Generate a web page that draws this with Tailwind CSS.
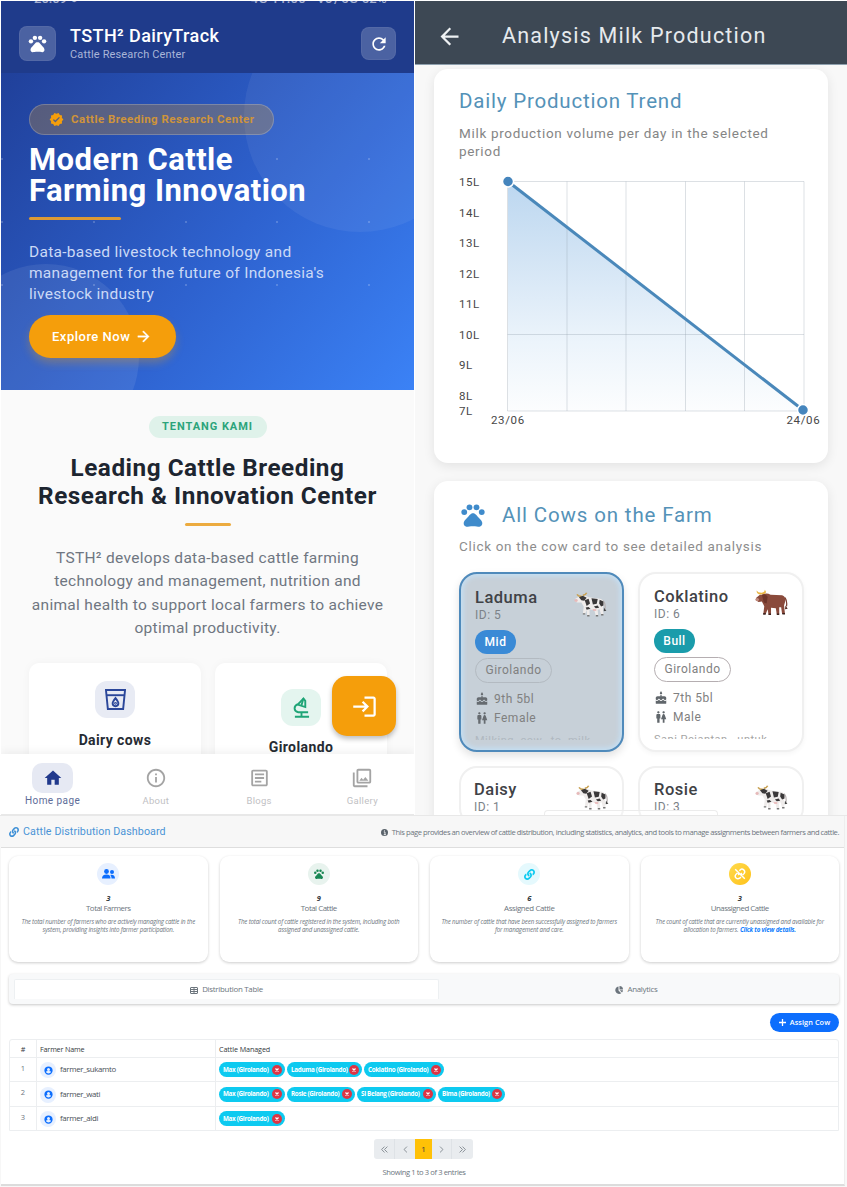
<!DOCTYPE html>
<html lang="en">
<head>
<meta charset="utf-8">
<title>DairyTrack</title>
<script src="https://cdn.jsdelivr.net/npm/@tailwindcss/browser@4"></script>
</head>
<body class="bg-white">
<svg class="hidden">
  <defs>
    <symbol id="pets" viewBox="0 0 24 24"><circle cx="4.5" cy="9.5" r="2.5"/><circle cx="9" cy="5.5" r="2.5"/><circle cx="15" cy="5.5" r="2.5"/><circle cx="19.5" cy="9.5" r="2.5"/><path d="M17.34 14.86c-.87-1.02-1.6-1.89-2.48-2.91-.46-.54-1.05-1.08-1.75-1.32-.11-.04-.22-.07-.33-.09-.25-.04-.52-.04-.78-.04s-.53 0-.79.05c-.11.02-.22.05-.33.09-.7.24-1.28.78-1.75 1.32-.87 1.02-1.6 1.89-2.48 2.91-1.31 1.31-2.92 2.76-2.62 4.79.29 1.02 1.02 2.03 2.33 2.32.73.15 3.06-.44 5.54-.44h.18c2.48 0 4.81.58 5.54.44 1.31-.29 2.04-1.31 2.33-2.32.31-2.04-1.3-3.49-2.61-4.8z"/></symbol>
    <symbol id="arrow" viewBox="0 0 24 24"><path d="M12 4l-1.41 1.41L16.17 11H4v2h12.17l-5.58 5.59L12 20l8-8z"/></symbol>
    <symbol id="cake" viewBox="0 0 24 24"><path d="M12 6c1.11 0 2-.9 2-2 0-.38-.1-.73-.29-1.03L12 0l-1.71 2.97c-.19.3-.29.65-.29 1.03 0 1.1.9 2 2 2zm4.6 9.99l-1.07-1.07-1.08 1.07c-1.3 1.3-3.58 1.31-4.89 0l-1.07-1.07-1.09 1.07C6.75 16.64 5.88 17 4.96 17c-.73 0-1.4-.23-1.96-.61V21c0 .55.45 1 1 1h16c.55 0 1-.45 1-1v-4.61c-.56.38-1.23.61-1.96.61-.92 0-1.79-.36-2.44-1.01zM18 9h-5V7h-2v2H6c-1.66 0-3 1.34-3 3v1.54c0 1.08.88 1.96 1.96 1.96.52 0 1.02-.2 1.38-.57l2.14-2.13 2.13 2.13c.74.74 2.03.74 2.77 0l2.14-2.13 2.13 2.13c.37.37.86.57 1.38.57 1.08 0 1.96-.88 1.96-1.96V12C21 10.34 19.66 9 18 9z"/></symbol>
    <symbol id="wc" viewBox="0 0 24 24"><path d="M5.5 22v-7.5H4V9c0-1.1.9-2 2-2h3c1.1 0 2 .9 2 2v5.5H9.5V22h-4zM18 22v-6h3l-2.54-7.63C18.18 7.55 17.42 7 16.56 7h-.12c-.86 0-1.63.55-1.9 1.37L12 16h3v6h3zM7.5 6c1.11 0 2-.89 2-2s-.89-2-2-2-2 .89-2 2 .89 2 2 2zm9 0c1.11 0 2-.89 2-2s-.89-2-2-2-2 .89-2 2 .89 2 2 2z"/></symbol>
    <symbol id="link" viewBox="0 0 512 512"><path d="M326.612 185.391c59.747 59.809 58.927 155.698.36 214.59-.11.12-.24.25-.36.37l-67.2 67.2c-59.27 59.27-155.699 59.262-214.96 0-59.27-59.26-59.27-155.7 0-214.96l37.106-37.106c9.84-9.84 26.786-3.3 27.294 10.606.648 17.722 3.826 35.527 9.69 52.721 1.986 5.822.567 12.262-3.783 16.612l-13.087 13.087c-28.026 28.026-28.905 73.66-1.155 101.96 28.024 28.579 74.086 28.749 102.325.51l67.2-67.19c28.191-28.191 28.073-73.757 0-101.83-3.701-3.694-7.429-6.564-10.341-8.569a16.037 16.037 0 0 1-6.947-12.606c-.396-10.567 3.348-21.456 11.698-29.806l21.054-21.055c5.521-5.521 14.182-6.199 20.584-1.731a152.482 152.482 0 0 1 20.522 17.197zM467.547 44.449c-59.261-59.262-155.69-59.27-214.96 0l-67.2 67.2c-.12.12-.25.25-.36.37-58.566 58.892-59.387 154.781.36 214.59a152.454 152.454 0 0 0 20.521 17.196c6.402 4.468 15.064 3.789 20.584-1.731l21.054-21.055c8.35-8.35 12.094-19.239 11.698-29.806a16.037 16.037 0 0 0-6.947-12.606c-2.912-2.005-6.64-4.875-10.341-8.569-28.073-28.073-28.191-73.639 0-101.83l67.2-67.19c28.239-28.239 74.3-28.069 102.325.51 27.75 28.3 26.872 73.934-1.155 101.96l-13.087 13.087c-4.35 4.35-5.769 10.79-3.783 16.612 5.864 17.194 9.042 34.999 9.69 52.721.509 13.906 17.454 20.446 27.294 10.606l37.106-37.106c59.271-59.259 59.271-155.699.001-214.959z"/></symbol>
    <symbol id="cow" viewBox="0 0 34 26"><path d="M30 9q3 3 2 9" fill="none" stroke="#b9b2b2" stroke-width="1.300"/><path d="M31 16.500l2.500 3-2.800.5z" fill="#444"/><path d="M7 4Q12 3 15 5.500L27 7Q31 8.500 31 12L30 16l.5 8H28L26.500 18l-2 .5.500 6.500h-2.500L21 19l-5-1v7h-2.500L13 18.500 11.500 23H9l1-8-2.500-4L3 11 .8 9.500 1.200 7 5 5z" fill="#efeceb"/><path d="M3 2.500Q4.500 5 8 4.500M9 3.500Q12 3 13 .8" stroke="#c8a050" stroke-width="1.700" fill="none"/><path d="M5 5.500l4-1.500 4 2-2.500 3-3-.5z" fill="#3a3839"/><ellipse cx="2" cy="8.900" rx="1.700" ry="1.500" fill="#e6b9b9"/><path d="M11 8.500l4-1.500 1.500 5-3.500 2.500zM18 6.500l6.500.8-1 5-4 .8zM26.500 8l4 2v4l-2.500 1-2-3zM12 16l3-.5 2 2-4 1zM20.500 15l4-1 1.500 2.500-3.500.5z" fill="#3a3839"/><path d="M19 18h4v1.500h-3z" fill="#e8b0b0"/><path d="M9 22h2.500v1.500H9zM13.500 24H16v1.500h-2.500zM22.500 24H25v1.500h-2.500zM28 23h2.500v1.500H28z" fill="#777"/></symbol>
    <symbol id="bull" viewBox="0 0 34 28"><path d="M31 9q2.500 4 1.500 9" fill="none" stroke="#7a3f33" stroke-width="1.300"/><path d="M31.500 17l2.300 3.500-2.800.5z" fill="#552a22"/><path d="M7 6Q12 3.500 16 6L28 6.500Q31.500 7.500 31.500 12L30 17l1 9h-3l-1-7-2 0v7.500h-2.500L21.500 20l-5-.5V27H14l-1-6-2 5H8.500L9.500 18 7 13 3.500 13.500.8 11.500 1.200 9 5 6z" fill="#8a4a3b"/><path d="M1.500 1.500Q1.500 5.500 6 5.800L10 5Q12.500 3.500 10 .8 10 3.500 7 3.800 3 4 1.500 1.500z" fill="#e9b440"/><path d="M7 6q4-2 6 2l-1 7-3-1z" fill="#6e3529"/><ellipse cx="2.200" cy="11" rx="1.900" ry="1.600" fill="#c08a7d"/><path d="M8.500 25H11v1.700H8.300zM14 25.500h2.500V27H14zM22.500 25.500H25V27h-2.500zM28.200 25H31v1.500h-2.700z" fill="#3d2420"/></symbol>
    <symbol id="usr" viewBox="0 0 24 24"><path d="M12 1a11 11 0 1 0 0 22 11 11 0 0 0 0-22zm0 4a4 4 0 1 1 0 8 4 4 0 0 1 0-8zm0 15c-3 0-5.500-1.500-7-3.700.5-2 4.500-2.800 7-2.800s6.500.8 7 2.800A8.500 8.500 0 0 1 12 20z"/></symbol>
    <symbol id="x" viewBox="0 0 10 10"><path d="M2.500 2.500l5 5m0-5l-5 5" stroke="#fff" stroke-width="2" fill="none"/></symbol>
  </defs>
</svg>
<div class="w-[847px] h-[1187px] overflow-hidden flex flex-col font-['Roboto',sans-serif]">
  <div class="flex h-[815px]">

    <!-- Mobile home -->
    <section class="relative w-[413px] ml-px mt-px h-[814px] overflow-hidden flex flex-col bg-[#fafafa] mr-px">
      <header class="h-[72px] shrink-0 bg-[#1f3b8b] overflow-hidden">
        <div class="h-[3px] overflow-hidden flex justify-between pl-[33px] pr-[27px] text-white/60 text-[13px] leading-[11px] font-medium">
          <span class="-mt-[8px]">20:09 &#9679;</span><span class="-mt-[8px] tracking-wide">4G 11.00 &nbsp; Vo) 5G 52%</span>
        </div>
        <div class="flex items-center pl-[18px] pr-[18px] mt-[22px] h-[35px]">
          <div class="w-[37px] h-[35px] rounded-[8px] bg-white/20 border border-white/5 flex items-center justify-center"><svg class="w-[21px] h-[21px] fill-white"><use href="#pets"/></svg></div>
          <div class="ml-[14px] flex-1 whitespace-nowrap">
            <div class="text-white text-[18px] leading-[20px] font-medium tracking-[0.400px]">TSTH² DairyTrack</div>
            <div class="text-[#a9b5d8] text-[11px] leading-[15px] tracking-[0.150px] mt-px">Cattle Research Center</div>
          </div>
          <div class="w-[35px] h-[33px] rounded-[8px] bg-white/20 border border-white/5 flex items-center justify-center"><svg viewBox="0 0 24 24" class="w-[20px] h-[20px] fill-white"><path d="M17.650 6.350C16.200 4.900 14.210 4 12 4c-4.420 0-7.990 3.580-7.990 8s3.570 8 7.990 8c3.730 0 6.840-2.550 7.730-6h-2.080c-.82 2.330-3.040 4-5.650 4-3.310 0-6-2.690-6-6s2.690-6 6-6c1.660 0 3.140.69 4.220 1.780L13 11h7V4l-2.350 2.350z"/></svg></div>
        </div>
      </header>

      <div class="relative h-[317px] shrink-0 overflow-hidden bg-linear-[130deg,#20409a_0%,#2e62cf_55%,#3b82f6_100%]">
        <div class="absolute left-[243px] -top-[73px] w-[232px] h-[232px] rounded-full bg-white/6"></div>
        <div class="absolute -left-[48px] top-[191px] w-[186px] h-[186px] rounded-full bg-white/8"></div>
        <svg class="absolute inset-0 w-full h-full fill-white/25"><g><circle cx="1" cy="86" r="1"/><circle cx="276" cy="86" r="1"/><circle cx="368" cy="86" r="1"/><circle cx="1" cy="149" r="1"/><circle cx="93" cy="149" r="1"/><circle cx="185" cy="149" r="1"/><circle cx="276" cy="149" r="1"/><circle cx="368" cy="149" r="1"/><circle cx="1" cy="212" r="1"/><circle cx="93" cy="212" r="1"/><circle cx="185" cy="212" r="1"/><circle cx="276" cy="212" r="1"/><circle cx="368" cy="212" r="1"/></g></svg>
        <div class="relative pl-[28px] pt-[31px] whitespace-nowrap">
          <div class="w-[245px] h-[31px] rounded-full bg-[#f59e0b]/25 border border-white/20 flex items-center pl-[19px]">
            <svg viewBox="0 0 24 24" class="w-[15px] h-[15px] fill-[#f59e0b]"><path d="M23 12l-2.440-2.790.34-3.690-3.610-.82-1.890-3.200L12 2.960 8.600 1.500 6.710 4.690 3.100 5.500l.34 3.700L1 12l2.440 2.790-.34 3.700 3.610.82L8.600 22.500l3.400-1.470 3.400 1.460 1.890-3.190 3.610-.82-.34-3.690L23 12zm-12.910 4.720l-3.800-3.810 1.480-1.480 2.320 2.330 5.850-5.870 1.480 1.480-7.330 7.350z"/></svg>
            <span class="ml-[7px] text-[11.500px] font-bold tracking-[0.480px] text-[#cf943a]">Cattle Breeding Research Center</span>
          </div>
          <h1 class="mt-[9px] text-white font-bold text-[31px] leading-[31px] tracking-[0.450px]">Modern Cattle<br>Farming Innovation</h1>
          <div class="mt-[11px] w-[92px] h-[3px] rounded bg-[#dd9a35]"></div>
          <p class="mt-[22px] text-[#cbd9f6] text-[15.500px] leading-[21px] tracking-[0.280px]">Data-based livestock technology and<br>management for the future of Indonesia's<br>livestock industry</p>
          <div class="mt-[10px] w-[147px] h-[43px] rounded-full bg-[#f59e0b] shadow-[0_5px_9px_rgba(245,158,11,0.3)] flex items-center pl-[23px] text-white text-[13px] font-medium tracking-[0.5px]">Explore Now<svg class="w-[17px] h-[17px] ml-[5px] fill-white stroke-white stroke-[0.5]"><use href="#arrow"/></svg></div>
        </div>
      </div>

      <div class="flex-1 overflow-hidden flex flex-col items-center whitespace-nowrap">
        <div class="mt-[26px] w-[118px] h-[22px] pt-px shrink-0 rounded-full bg-[#dff2ea] flex items-center justify-center text-[#2ba47b] text-[11px] font-bold tracking-[0.950px]">TENTANG KAMI</div>
        <h2 class="mt-[16px] text-center text-[#1d2530] font-bold text-[24.300px] leading-[28px] tracking-[0.520px]">Leading Cattle Breeding<br>Research &amp; Innovation Center</h2>
        <div class="mt-[13px] w-[46px] h-[3px] shrink-0 rounded bg-[#ecab3f]"></div>
        <p class="mt-[21px] text-center text-[#6f7681] text-[15.500px] leading-[23.300px] tracking-[0.300px]">TSTH² develops data-based cattle farming<br>technology and management, nutrition and<br>animal health to support local farmers to achieve<br>optimal productivity.</p>
        <div class="mt-[23px] flex gap-[14px] self-start ml-[28px] text-[#262b33] font-bold text-[14px] leading-[18px] tracking-[0.4px]">
          <div class="w-[172px] h-[130px] rounded-[10px] bg-white shadow-[0_0_8px_rgba(0,0,0,0.04)] flex flex-col items-center pt-[18px]">
            <div class="w-[40px] h-[37px] rounded-[12px] bg-[#e8ebf4] flex items-center justify-center"><svg viewBox="0 0 22 24" class="w-[21px] h-[23px]" fill="none" stroke="#2b479a" stroke-width="2"><path d="M1 2h20l-2 20H3z"/><path d="M2 7.500h18"/><path d="M11 10.500c-2 2.500-3 3.800-3 5.500a3 3 0 0 0 6 0c0-1.700-1-3-3-5.500z"/><circle cx="11" cy="16" r=".5"/></svg></div>
            <div class="mt-[13px]">Dairy cows</div>
          </div>
          <div class="w-[172px] h-[130px] rounded-[10px] bg-white shadow-[0_0_8px_rgba(0,0,0,0.04)] flex flex-col items-center pt-[26px]">
            <div class="w-[40px] h-[37px] rounded-[12px] bg-[#e4f5ef] flex items-center justify-center"><svg viewBox="0 0 18 22" class="w-[17px] h-[21px]" fill="none" stroke="#1fa577" stroke-width="2"><path d="M11 1.500L5 8l8 2.500 0-6.500z"/><path d="M11 1.500L9 8.500M5 7.500C.5 9.500.5 15 5.500 16H16M9 16v4M2 20.800h15"/></svg></div>
            <div class="mt-[12px]">Girolando</div>
          </div>
        </div>
      </div>

      <nav class="h-[61px] shrink-0 bg-white shadow-[0_-3px_8px_rgba(0,0,0,0.05)] relative flex justify-around text-[9.500px] leading-[12px] text-[#bfc1c4] tracking-[0.3px] whitespace-nowrap border-b border-[#e8e8e8]">
        <div class="w-[103px] flex flex-col items-center pt-[9px] text-[#5d6c98] text-[10px]"><div class="w-[41px] h-[30px] rounded-[10px] bg-[#e6e9f3] flex items-center justify-center"><svg viewBox="0 0 24 24" class="w-[20px] h-[20px] fill-[#21398c]"><path d="M10 20v-6h4v6h5v-8h3L12 3 2 12h3v8z"/></svg></div><span class="mt-[2px] tracking-[0.450px]">Home page</span></div>
        <div class="w-[103px] flex flex-col items-center pt-[13px]"><svg viewBox="0 0 24 24" class="w-[22px] h-[22px] fill-[#a4a4a4]"><path d="M11 7h2v2h-2zm0 4h2v6h-2zm1-9C6.480 2 2 6.480 2 12s4.480 10 10 10 10-4.480 10-10S17.520 2 12 2zm0 18c-4.410 0-8-3.590-8-8s3.590-8 8-8 8 3.590 8 8-3.590 8-8 8z"/></svg><span class="mt-[6px]">About</span></div>
        <div class="w-[103px] flex flex-col items-center pt-[13px]"><svg viewBox="0 0 24 24" class="w-[23px] h-[22px] fill-[#a4a4a4]"><path d="M19 5v14H5V5h14m0-2H5c-1.100 0-2 .9-2 2v14c0 1.100.9 2 2 2h14c1.100 0 2-.9 2-2V5c0-1.100-.9-2-2-2zM14 17H7v-2h7v2zm3-4H7v-2h10v2zm0-4H7V7h10v2z"/></svg><span class="mt-[6px]">Blogs</span></div>
        <div class="w-[103px] flex flex-col items-center pt-[13px]"><svg viewBox="0 0 24 24" class="w-[22px] h-[22px] fill-[#a4a4a4]"><path d="M20 4v12H8V4h12m0-2H8c-1.100 0-2 .9-2 2v12c0 1.100.9 2 2 2h12c1.100 0 2-.9 2-2V4c0-1.100-.9-2-2-2zm-8.500 9.670l1.690 2.260 2.480-3.100L19 15H9zM2 6v14c0 1.100.9 2 2 2h14v-2H4V6H2z"/></svg><span class="mt-[6px]">Gallery</span></div>
      </nav>
      <button class="absolute left-[331px] top-[675px] w-[64px] h-[60px] rounded-[15px] bg-[#f59e0b] shadow-[0_3px_5px_rgba(0,0,0,0.25)] flex items-center justify-center"><svg viewBox="0 0 24 24" class="w-[27px] h-[27px] fill-white"><path d="M11 7L9.600 8.400l2.600 2.600H2v2h10.200l-2.600 2.600L11 17l5-5-5-5zm9 12h-8v2h8c1.100 0 2-.9 2-2V5c0-1.100-.9-2-2-2h-8v2h8v14z"/></svg></button>
    </section>

    <!-- Milk analysis -->
    <section class="relative w-[432px] mt-px h-[814px] overflow-hidden bg-[#f8f8f8] whitespace-nowrap">
      <header class="h-[64px] bg-[#3d4854] border-b border-[#8ea0ae] flex items-center pl-[21px] pt-[7px]">
        <svg class="w-[27px] h-[27px] fill-[#eef1f3] rotate-180"><use href="#arrow"/></svg>
        <span class="ml-[39px] text-[#e6eaed] text-[21.500px] tracking-[1.200px]">Analysis Milk Production</span>
      </header>
      <div class="ml-[19px] mt-[4px] w-[394px] h-[394px] rounded-[14px] bg-white shadow-[0_3px_12px_rgba(0,0,0,0.09)] pl-[25px] pt-[20px]">
        <h2 class="text-[#5492b8] text-[20.500px] leading-[25px] tracking-[0.8px]">Daily Production Trend</h2>
        <p class="mt-[10px] text-[#858585] text-[13.500px] leading-[18px] tracking-[0.680px]">Milk production volume per day in the selected<br>period</p>
        <svg class="block mt-[13px] w-[369px] h-[260px] font-['Roboto',sans-serif]" viewBox="459 173 369 260">
          <defs><linearGradient id="g" x1="0" y1="0" x2="0" y2="1"><stop offset="0" stop-color="#bcd7f0"/><stop offset="0.350" stop-color="#d4e5f5"/><stop offset="0.700" stop-color="#ecf4fb"/><stop offset="1" stop-color="#fcfdfe"/></linearGradient></defs>
          <path d="M508 181.500L803 411H508z" fill="url(#g)"/>
          <path d="M507.500 181.500H804V411H507.500zM567 181.500V411M626 181.500V411M685.500 181.500V411M744.500 181.500V411M507.500 334.500H804" fill="none" stroke="#8c98a4" stroke-opacity="0.3"/>
          <path d="M508 181.500L803 410" stroke="#4a88ba" stroke-width="3"/>
          <circle cx="508" cy="181.500" r="5.500" fill="#4585bd" stroke="#fff" stroke-width="1.500"/><circle cx="803" cy="410" r="5.500" fill="#4585bd" stroke="#fff" stroke-width="1.500"/>
          <g font-size="11.500" fill="#474747" letter-spacing="0.500"><text x="459" y="186">15L</text><text x="459" y="216.500">14L</text><text x="459" y="247">13L</text><text x="459" y="277.500">12L</text><text x="459" y="308">11L</text><text x="459" y="338.500">10L</text><text x="459" y="369">9L</text><text x="459" y="399.500">8L</text><text x="459" y="414.500">7L</text><text x="491" y="423.500" letter-spacing="0.650">23/06</text><text x="786.500" y="423.500" letter-spacing="0.650">24/06</text></g>
        </svg>
      </div>
      <div class="ml-[19px] mt-[18px] w-[394px] h-[360px] rounded-[14px] bg-white shadow-[0_3px_12px_rgba(0,0,0,0.09)] pl-[25px] pt-[20px]">
        <div class="flex items-center h-[28px]"><svg class="w-[28px] h-[28px] fill-[#3f8bcb]"><use href="#pets"/></svg><h2 class="ml-[15px] text-[#5492b8] text-[20.500px] tracking-[0.850px]">All Cows on the Farm</h2></div>
        <p class="mt-[8px] text-[#8d8d8d] text-[13.500px] leading-[18px] tracking-[0.680px]">Click on the cow card to see detailed analysis</p>
        <div class="mt-[17px] grid grid-cols-[165px_166px] gap-x-[14px] gap-y-[14px] text-[12px] leading-[15px] tracking-[0.5px] text-[#808080]">
          <article class="h-[180px] rounded-[18px] border-2 border-[#4f8abb] bg-[#c7d0d8] shadow-[inset_0_0_5px_2px_#c4e0f6,0_4px_8px_rgba(0,0,0,0.12)] px-[14px] pt-[14px]">
            <div class="flex justify-between h-[35px]"><div><div class="text-[#3f4246] text-[16.500px] leading-[20px] font-medium">Laduma</div><div class="text-[#7c8288]">ID: 5</div></div><svg class="w-[33px] h-[25px] mt-[4px] mr-[1px]"><use href="#cow"/></svg></div>
            <div class="mt-[7px] w-[41px] h-[24px] rounded-full bg-[#3a8ad6] text-white font-medium flex items-center justify-center">Mid</div>
            <div class="mt-[4px] w-[77px] h-[25px] rounded-full border border-[#b3bac1] flex items-center justify-center">Girolando</div>
            <div class="mt-[8px] flex items-center h-[16px]"><svg class="w-[14px] h-[14px] fill-[#666b70]"><use href="#cake"/></svg><span class="ml-[5px]">9th 5bl</span></div>
            <div class="mt-[3px] flex items-center h-[16px]"><svg class="w-[14px] h-[14px] fill-[#666b70]"><use href="#wc"/></svg><span class="ml-[5px]">Female</span></div>
            <div class="mt-[9px] h-[5px] overflow-hidden text-[11px] leading-[11px] text-[#b0b8c0]">Milking &nbsp;cow, &nbsp;to &nbsp;milk</div>
          </article>
          <article class="h-[180px] rounded-[18px] border-2 border-[#f0f0f0] bg-white shadow-[0_2px_5px_rgba(0,0,0,0.04)] px-[14px] pt-[13px]">
            <div class="flex justify-between h-[35px]"><div><div class="text-[#3f4246] text-[16.500px] leading-[20px] font-medium">Coklatino</div><div class="text-[#7c8288]">ID: 6</div></div><svg class="w-[33px] h-[27px] mt-[2px]"><use href="#bull"/></svg></div>
            <div class="mt-[7px] w-[41px] h-[24px] rounded-full bg-[#1a9cab] text-white font-medium flex items-center justify-center">Bull</div>
            <div class="mt-[4px] w-[77px] h-[25px] rounded-full border border-[#b5aeb1] flex items-center justify-center">Girolando</div>
            <div class="mt-[8px] flex items-center h-[16px]"><svg class="w-[14px] h-[14px] fill-[#60666b]"><use href="#cake"/></svg><span class="ml-[5px]">7th 5bl</span></div>
            <div class="mt-[3px] flex items-center h-[16px]"><svg class="w-[14px] h-[14px] fill-[#60666b]"><use href="#wc"/></svg><span class="ml-[5px]">Male</span></div>
            <div class="mt-[9px] h-[5px] overflow-hidden text-[11px] leading-[11px] text-[#a5a5a5]">Sapi Pejantan &nbsp; untuk</div>
          </article>
          <article class="h-[60px] rounded-[18px] border-2 border-[#f0f0f0] bg-white px-[13px] pt-[12px]">
            <div class="flex justify-between"><div><div class="text-[#3f4246] text-[16.500px] leading-[20px] font-medium">Daisy</div><div class="text-[#7c8288]">ID: 1</div></div><svg class="w-[33px] h-[25px] mt-[5px]"><use href="#cow"/></svg></div>
          </article>
          <article class="h-[60px] rounded-[18px] border-2 border-[#f0f0f0] bg-white px-[14px] pt-[12px]">
            <div class="flex justify-between"><div><div class="text-[#3f4246] text-[16.500px] leading-[20px] font-medium">Rosie</div><div class="text-[#7c8288]">ID: 3</div></div><svg class="w-[33px] h-[25px] mt-[5px]"><use href="#cow"/></svg></div>
          </article>
        </div>
      </div>
      <div class="absolute left-[129px] bottom-0 w-[174px] h-[5px] rounded-t bg-white/20 border border-b-0 border-[#ececec]"></div>
    </section>
  </div>

  <!-- Distribution dashboard -->
  <section class="h-[372px] shrink-0 border-t border-[#e8e8e8] bg-[#f7f7f7] pl-px pr-[2px] font-['Open_Sans',sans-serif] text-[#6c757d] whitespace-nowrap">
    <div class="h-[370px] border-b-2 border-[#dcdcdc] border-r border-r-[#eeeeee] bg-white">
      <header class="h-[32px] bg-[#f7f7f7] border-b border-[#dedede] flex items-center justify-between pl-[8px] pr-[5px]">
        <div class="flex items-center"><svg class="w-[10px] h-[10px] fill-[#3d8fd6]"><use href="#link"/></svg><h1 class="ml-[4px] font-['Roboto',sans-serif] text-[10.700px] leading-[14px] tracking-[0.100px] text-[#4a94d6]">Cattle Distribution Dashboard</h1></div>
        <div class="flex items-center text-[7.600px] tracking-[-0.440px] mt-[3px]"><svg viewBox="0 0 10 10" class="w-[7px] h-[7px] mr-[4px]"><circle cx="5" cy="5" r="5" fill="#5a636b"/><path d="M4 4.200h1.700v3.500M4 8h3M4.500 2.500h1.200" stroke="#fff" stroke-width="1.200" fill="none"/></svg>This page provides an overview of cattle distribution, including statistics, analytics, and tools to manage assignments between farmers and cattle.</div>
      </header>
      <div class="pl-[8px] pr-[5px]">
        <div class="mt-[8px] grid grid-cols-4 gap-[12px] text-center">
          <div class="h-[106px] rounded-[9px] bg-white shadow-[0_1px_3px_rgba(0,0,0,0.2)] flex flex-col items-center pt-[7px]">
            <div class="w-[22px] h-[22px] rounded-full bg-[#e7f0ff] flex items-center justify-center"><svg viewBox="0 0 26 20" class="w-[13px] h-[10px] fill-[#0d6efd]"><circle cx="9" cy="5" r="4.800"/><path d="M0 19c0-5 3-8 9-8s8 3 8 8z"/><circle cx="20" cy="6" r="4"/><path d="M16.500 11.800c6-1.300 9.500 1.500 9.500 7.200h-7c0-3-.8-5.500-2.500-7.200z"/></svg></div>
            <div class="mt-[8px] text-[7.500px] leading-[10px] font-bold italic text-[#343a40]">3</div>
            <div class="text-[7.900px] leading-[11px] tracking-[-0.480px]">Total Farmers</div>
            <p class="mt-[4px] text-[6.200px] leading-[8px] italic tracking-[-0.180px]">The total number of farmers who are actively managing cattle in the<br>system, providing insights into farmer participation.</p>
          </div>
          <div class="h-[106px] rounded-[9px] bg-white shadow-[0_1px_3px_rgba(0,0,0,0.2)] flex flex-col items-center pt-[7px]">
            <div class="w-[22px] h-[22px] rounded-full bg-[#e8f3ee] flex items-center justify-center"><svg class="w-[12px] h-[12px] fill-[#198754]"><use href="#pets"/></svg></div>
            <div class="mt-[8px] text-[7.500px] leading-[10px] font-bold italic text-[#343a40]">9</div>
            <div class="text-[7.900px] leading-[11px] tracking-[-0.480px]">Total Cattle</div>
            <p class="mt-[4px] text-[6.200px] leading-[8px] italic tracking-[-0.180px]">The total count of cattle registered in the system, including both<br>assigned and unassigned cattle.</p>
          </div>
          <div class="h-[106px] rounded-[9px] bg-white shadow-[0_1px_3px_rgba(0,0,0,0.2)] flex flex-col items-center pt-[7px]">
            <div class="w-[22px] h-[22px] rounded-full bg-[#e5f9fd] flex items-center justify-center"><svg class="w-[11px] h-[11px] fill-[#0dcaf0]"><use href="#link"/></svg></div>
            <div class="mt-[8px] text-[7.500px] leading-[10px] font-bold italic text-[#343a40]">6</div>
            <div class="text-[7.900px] leading-[11px] tracking-[-0.400px]">Assigned Cattle</div>
            <p class="mt-[4px] text-[6.200px] leading-[8px] italic tracking-[-0.180px]">The number of cattle that have been successfully assigned to farmers<br>for management and care.</p>
          </div>
          <div class="h-[106px] rounded-[9px] bg-white shadow-[0_1px_3px_rgba(0,0,0,0.2)] flex flex-col items-center pt-[7px]">
            <div class="w-[22px] h-[22px] rounded-full bg-linear-[135deg,#ffda4d,#ffc21a] flex items-center justify-center"><svg viewBox="0 0 20 20" class="w-[12px] h-[12px]" fill="none" stroke="#fff" stroke-width="2.400"><path d="M2 2l16 16M9 4.500l2-2c3-2.500 9 2 6 6.500l-2.500 2.500M5.500 8.500L3 11c-3 4 2 9 6.500 6l2-2M8.500 11.500c-1.500-1.500-1.500-2.500-.5-3.500M11.500 8.500c1.500 1.500 1.500 2.500.5 3.500"/></svg></div>
            <div class="mt-[8px] text-[7.500px] leading-[10px] font-bold italic text-[#343a40]">3</div>
            <div class="text-[7.900px] leading-[11px] tracking-[-0.480px]">Unassigned Cattle</div>
            <p class="mt-[4px] text-[6.200px] leading-[8px] italic tracking-[-0.180px]">The count of cattle that are currently unassigned and available for<br>allocation to farmers. <b class="text-[#0d7dfd]">Click to view details.</b></p>
          </div>
        </div>
        <div class="mt-[12px] h-[30px] rounded-[4px] bg-[#f8f9fa] shadow-[0_1px_3px_rgba(0,0,0,0.22)] flex pl-[5px] py-[5px] text-[7.900px] tracking-[-0.270px]">
          <div class="w-[425px] h-[20px] bg-white border border-[#edf0f2] border-b-0 rounded-t-[2px] flex items-center justify-center pt-px"><svg viewBox="0 0 16 14" class="w-[8px] h-[7px] mr-[4px]" fill="none" stroke="#6c757d" stroke-width="2"><rect x="1" y="1" width="14" height="12" rx="1"/><path d="M1 5h14M1 9h14M8 1v12"/></svg>Distribution Table</div>
          <div class="w-[395px] h-[20px] flex items-center justify-center pt-px"><svg viewBox="0 0 16 16" class="w-[8px] h-[8px] mr-[4px] fill-[#6c757d]"><path d="M7 1v8l5.500 5.500A7.500 7.500 0 1 1 7 1zM9 0a7 7 0 0 1 7 7H9zM9.500 8.500H16a7 7 0 0 1-2 4.500z"/></svg>Analytics</div>
        </div>
        <div class="mt-[9px] flex justify-end"><div class="w-[69px] h-[19px] rounded-full bg-[#0d6efd] text-white flex items-center justify-center text-[7.300px] font-semibold tracking-[0.080px]"><svg viewBox="0 0 10 10" class="w-[7px] h-[7px] mr-[4px]" stroke="#fff" stroke-width="1.800"><path d="M5 0v10M0 5h10"/></svg>Assign Cow</div></div>
        <div class="mt-[7px] border border-[#eceef0] rounded-t-[3px] grid grid-cols-[27px_179px_1fr] text-[7.200px]">
          <div class="h-[18px] pt-px border-b border-r border-[#eceef0] flex items-center justify-center text-[#343a40]">#</div><div class="pt-px border-b border-r border-[#eceef0] flex items-center pl-[3px] text-[#343a40] tracking-[-0.170px]">Farmer Name</div><div class="pt-px border-b border-[#eceef0] flex items-center pl-[3px] text-[#343a40] tracking-[-0.100px]">Cattle Managed</div>

          <div class="h-[24px] border-b border-r border-[#eceef0] flex justify-center pt-[5px] text-[7.500px]">1</div>
          <div class="border-b border-r border-[#eceef0] flex items-center pl-[3px] pt-px text-[#495057] text-[7.900px] tracking-[-0.340px]"><span class="w-[16px] h-[16px] rounded-full bg-[#e7f0ff] flex items-center justify-center mr-[4px]"><svg class="w-[9px] h-[9px] fill-[#0d6efd]"><use href="#usr"/></svg></span>farmer_sukamto</div>
          <div class="border-b border-[#eceef0] flex items-center gap-[2px] pl-[3px] text-[6.300px] font-bold text-white tracking-[-0.320px]">
            <span class="w-[66px] h-[15px] rounded-full bg-[#0dcaf0] flex items-center justify-between pl-[4px] pr-[3px]">Max (Girolando)<i class="w-[10px] h-[10px] shrink-0 rounded-full bg-[#dc3545] flex items-center justify-center"><svg class="w-[6px] h-[6px]"><use href="#x"/></svg></i></span>
            <span class="w-[75px] h-[15px] rounded-full bg-[#0dcaf0] flex items-center justify-between pl-[4px] pr-[3px]">Laduma (Girolando)<i class="w-[10px] h-[10px] shrink-0 rounded-full bg-[#dc3545] flex items-center justify-center"><svg class="w-[6px] h-[6px]"><use href="#x"/></svg></i></span>
            <span class="w-[80px] h-[15px] rounded-full bg-[#0dcaf0] flex items-center justify-between pl-[4px] pr-[3px]">Coklatino (Girolando)<i class="w-[10px] h-[10px] shrink-0 rounded-full bg-[#dc3545] flex items-center justify-center"><svg class="w-[6px] h-[6px]"><use href="#x"/></svg></i></span>
          </div>

          <div class="h-[25px] border-b border-r border-[#eceef0] flex justify-center pt-[5px] text-[7.500px]">2</div>
          <div class="border-b border-r border-[#eceef0] flex items-center pl-[3px] pt-px text-[#495057] text-[7.900px] tracking-[-0.340px]"><span class="w-[16px] h-[16px] rounded-full bg-[#e7f0ff] flex items-center justify-center mr-[4px]"><svg class="w-[9px] h-[9px] fill-[#0d6efd]"><use href="#usr"/></svg></span>farmer_wati</div>
          <div class="border-b border-[#eceef0] flex items-center gap-[2px] pl-[3px] text-[6.300px] font-bold text-white tracking-[-0.320px]">
            <span class="w-[66px] h-[15px] rounded-full bg-[#0dcaf0] flex items-center justify-between pl-[4px] pr-[3px]">Max (Girolando)<i class="w-[10px] h-[10px] shrink-0 rounded-full bg-[#dc3545] flex items-center justify-center"><svg class="w-[6px] h-[6px]"><use href="#x"/></svg></i></span>
            <span class="w-[68px] h-[15px] rounded-full bg-[#0dcaf0] flex items-center justify-between pl-[4px] pr-[3px]">Rosie (Girolando)<i class="w-[10px] h-[10px] shrink-0 rounded-full bg-[#dc3545] flex items-center justify-center"><svg class="w-[6px] h-[6px]"><use href="#x"/></svg></i></span>
            <span class="w-[79px] h-[15px] rounded-full bg-[#0dcaf0] flex items-center justify-between pl-[4px] pr-[3px]">Si Belang (Girolando)<i class="w-[10px] h-[10px] shrink-0 rounded-full bg-[#dc3545] flex items-center justify-center"><svg class="w-[6px] h-[6px]"><use href="#x"/></svg></i></span>
            <span class="w-[67px] h-[15px] rounded-full bg-[#0dcaf0] flex items-center justify-between pl-[4px] pr-[3px]">Bima (Girolando)<i class="w-[10px] h-[10px] shrink-0 rounded-full bg-[#dc3545] flex items-center justify-center"><svg class="w-[6px] h-[6px]"><use href="#x"/></svg></i></span>
          </div>

          <div class="h-[23px] border-r border-[#eceef0] flex justify-center pt-[5px] text-[7.500px]">3</div>
          <div class="border-r border-[#eceef0] flex items-center pl-[3px] pt-px text-[#495057] text-[7.900px] tracking-[-0.340px]"><span class="w-[16px] h-[16px] rounded-full bg-[#e7f0ff] flex items-center justify-center mr-[4px]"><svg class="w-[9px] h-[9px] fill-[#0d6efd]"><use href="#usr"/></svg></span>farmer_aldi</div>
          <div class="flex items-center pl-[3px] text-[6.300px] font-bold text-white tracking-[-0.320px]">
            <span class="w-[66px] h-[15px] rounded-full bg-[#0dcaf0] flex items-center justify-between pl-[4px] pr-[3px]">Max (Girolando)<i class="w-[10px] h-[10px] shrink-0 rounded-full bg-[#dc3545] flex items-center justify-center"><svg class="w-[6px] h-[6px]"><use href="#x"/></svg></i></span>
          </div>
        </div>
        <div class="mt-[8px] flex justify-center mr-px"><div class="h-[20px] grid grid-cols-[21px_20px_17px_20px_21px] rounded-[3px] overflow-hidden bg-[#e9ecef] text-[8px] text-[#343a40]">
          <div class="flex items-center justify-center border-r border-[#dee2e6]"><svg viewBox="0 0 12 12" class="w-[7px] h-[7px]" fill="none" stroke="#7d858c" stroke-width="1.500"><path d="M6 1L1 6l5 5M11 1L6 6l5 5"/></svg></div>
          <div class="flex items-center justify-center"><svg viewBox="0 0 12 12" class="w-[7px] h-[7px]" fill="none" stroke="#7d858c" stroke-width="1.500"><path d="M8.500 1l-5 5 5 5"/></svg></div>
          <div class="flex items-center justify-center bg-[#ffc107]">1</div>
          <div class="flex items-center justify-center border-r border-[#dee2e6]"><svg viewBox="0 0 12 12" class="w-[7px] h-[7px]" fill="none" stroke="#7d858c" stroke-width="1.500"><path d="M3.500 1l5 5-5 5"/></svg></div>
          <div class="flex items-center justify-center"><svg viewBox="0 0 12 12" class="w-[7px] h-[7px]" fill="none" stroke="#7d858c" stroke-width="1.500"><path d="M1 1l5 5-5 5M6 1l5 5-5 5"/></svg></div>
        </div></div>
        <div class="mt-[8px] text-center text-[7.600px] leading-[11px] tracking-[-0.400px]">Showing 1 to 3 of 3 entries</div>
      </div>
    </div>
  </section>
</div>
</body>
</html>
